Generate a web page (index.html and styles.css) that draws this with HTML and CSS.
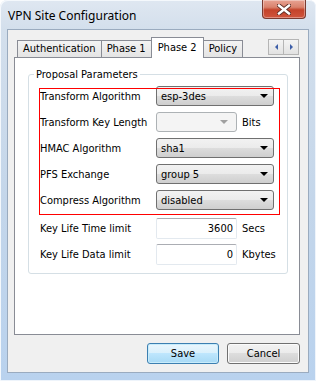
FILE: index.html
```html
<!DOCTYPE html>
<html lang="en">
<head>
  <meta charset="UTF-8">
  <meta name="viewport" content="width=device-width, initial-scale=1.0">
  <title>VPN Site Configuration</title>
  <link rel="stylesheet" href="styles.css">
</head>
<body>
  <div class="window">
    <!-- Title bar -->
    <div class="titlebar">
      <span class="title">VPN Site Configuration</span>
      <button class="close" type="button" aria-label="Close">
        <svg width="14" height="11" viewBox="0 0 14 11">
          <path d="M2 1.5 L12 9.5 M12 1.5 L2 9.5" stroke="#5a2a22" stroke-width="4.2" stroke-linecap="square"/>
          <path d="M2 1.5 L12 9.5 M12 1.5 L2 9.5" stroke="#ffffff" stroke-width="2.4" stroke-linecap="square"/>
        </svg>
      </button>
    </div>

    <div class="client">
      <div class="tabs">
        <div class="tab-strip">
          <span class="tab">Authentication</span>
          <span class="tab">Phase 1</span>
          <span class="tab active">Phase 2</span>
          <span class="tab">Policy</span>
          <span class="tab-scroll">
            <span class="scroll-btn"><span class="arrow left"></span></span>
            <span class="scroll-btn"><span class="arrow right"></span></span>
          </span>
        </div>

        <div class="tab-panel">
          <fieldset class="group">
            <legend>Proposal Parameters</legend>

            <div class="proposal">
              <div class="row">
                <label>Transform Algorithm</label>
                <div class="combo"><span>esp-3des</span><i class="caret"></i></div>
              </div>
              <div class="row">
                <label>Transform Key Length</label>
                <div class="combo short disabled"><span></span><i class="caret"></i></div>
                <span class="unit">Bits</span>
              </div>
              <div class="row">
                <label>HMAC Algorithm</label>
                <div class="combo"><span>sha1</span><i class="caret"></i></div>
              </div>
              <div class="row">
                <label>PFS Exchange</label>
                <div class="combo"><span>group 5</span><i class="caret"></i></div>
              </div>
              <div class="row">
                <label>Compress Algorithm</label>
                <div class="combo"><span>disabled</span><i class="caret"></i></div>
              </div>
              <!-- red annotation frame drawn over the rows -->
              <div class="highlight"></div>
            </div>

            <div class="lifetime">
              <div class="row">
                <label>Key Life Time limit</label>
                <div class="field">3600</div>
                <span class="unit">Secs</span>
              </div>
              <div class="row">
                <label>Key Life Data limit</label>
                <div class="field">0</div>
                <span class="unit">Kbytes</span>
              </div>
            </div>
          </fieldset>
        </div>
      </div>

      <div class="buttons">
        <button class="btn default" type="button">Save</button>
        <button class="btn" type="button">Cancel</button>
      </div>
    </div>
  </div>
</body>
</html>
```

FILE: styles.css
```css
/* Dialog window */
html, body {
  margin: 0;
  padding: 0;
  background: #ffffff;
}

.window {
  width: 316px;
  height: 381px;
  box-sizing: border-box;
  padding: 0 7px 8px 7px;
  border-radius: 7px 7px 0 0;
  background: linear-gradient(#dfe7f1 0px, #d3dfec 30px, #c4d6ea 200px, #b9d2ee 381px);
  box-shadow: inset 1px 1px 0 #f4f8fc, inset -1px -1px 0 #eef4fb;
  font-family: "DejaVu Sans Condensed", "Liberation Sans", sans-serif;
  font-size: 11px;
  color: #000;
}

.titlebar {
  height: 29px;
  display: flex;
  justify-content: space-between;
  align-items: flex-start;
}

.title {
  font-family: "Noto Sans", "Open Sans", sans-serif;
  font-size: 12px;
  margin: 7px 0 0 1px;
  color: #000;
}

.close {
  width: 44px;
  height: 19px;
  margin-right: 3px;
  padding: 0;
  border: 1px solid #7a3b31;
  border-top: none;
  border-radius: 0 0 4px 4px;
  background: linear-gradient(#e8a393 0%, #d9826d 40%, #c4432a 55%, #d0553d 100%);
  box-shadow: inset 0 0 0 1px rgba(255, 255, 255, 0.35);
  display: flex;
  align-items: center;
  justify-content: center;
}

/* Client area */
.client {
  height: 344px;
  box-sizing: border-box;
  border: 1px solid #9aabbf;
  background: #f0f0f0;
  padding: 7px 8px 0 6px;
  display: flex;
  flex-direction: column;
}

/* Tab control */
.tab-strip {
  height: 20px;
  display: flex;
  align-items: flex-end;
  padding-left: 3px;
  position: relative;
  z-index: 1;
}

.tab {
  height: 16px;
  line-height: 16px;
  padding: 0 5px;
  border: 1px solid #898c95;
  border-bottom: none;
  margin-left: -1px;
  background: linear-gradient(#f3f3f3, #e4e4e4);
  white-space: nowrap;
}

.tab:first-child {
  margin-left: 0;
}

.tab.active {
  height: 20px;
  line-height: 19px;
  margin-bottom: -1px;
  padding: 0 6px;
  background: #ffffff;
  position: relative;
}

.tab-scroll {
  margin-left: auto;
  margin-right: 1px;
  align-self: flex-start;
  margin-top: 2px;
  display: flex;
}

.scroll-btn {
  width: 14px;
  height: 14px;
  border: 1px solid #b5b5b5;
  background: linear-gradient(#f4f4f4, #e2e2e2);
  display: flex;
  align-items: center;
  justify-content: center;
}

.scroll-btn + .scroll-btn {
  margin-left: -1px;
}

.arrow {
  width: 0;
  height: 0;
  border-top: 3px solid transparent;
  border-bottom: 3px solid transparent;
}

.arrow.left {
  border-right: 3px solid #3d5ea8;
}

.arrow.right {
  border-left: 3px solid #3d5ea8;
}

.tab-panel {
  height: 278px;
  box-sizing: border-box;
  border: 1px solid #898c95;
  background: #ffffff;
  padding: 10px 13px 0 13px;
}

/* Group box */
.group {
  margin: 0;
  border: 1px solid #d5dfe5;
  border-radius: 3px;
  padding: 5px 11px 8px 11px;
}

.group legend {
  padding: 0 2px;
  margin-left: -6px;
}

.proposal {
  position: relative;
  display: flex;
  flex-direction: column;
  gap: 6px;
}

.row {
  display: flex;
  align-items: center;
}

.row label {
  width: 116px;
  flex: none;
}

.highlight {
  position: absolute;
  left: -1px;
  top: 2px;
  width: 241px;
  height: 127px;
  box-sizing: border-box;
  border: 1px solid #ff0000;
  pointer-events: none;
}

/* Combo boxes */
.combo {
  width: 118px;
  height: 20px;
  box-sizing: border-box;
  border: 1px solid #707070;
  border-radius: 3px;
  background: linear-gradient(#f2f2f2 0%, #ebebeb 50%, #dddddd 50%, #cfcfcf 100%);
  display: flex;
  align-items: center;
  justify-content: space-between;
  padding: 0 5px 0 4px;
}

.combo.short {
  width: 81px;
}

.combo.disabled {
  border-color: #adb2b5;
  background: #f4f4f4;
}

.caret {
  width: 0;
  height: 0;
  border-left: 4px solid transparent;
  border-right: 4px solid transparent;
  border-top: 4px solid #000;
}

.combo.disabled .caret {
  border-top-color: #a0a0a0;
  margin-right: 3px;
}

.unit {
  margin-left: 5px;
}

/* Text fields */
.lifetime {
  display: flex;
  flex-direction: column;
  gap: 5px;
  margin-top: 8px;
}

.field {
  width: 81px;
  height: 21px;
  box-sizing: border-box;
  border: 1px solid #e3e9ef;
  border-top-color: #abadb3;
  border-radius: 2px;
  background: #ffffff;
  text-align: right;
  line-height: 19px;
  padding-right: 3px;
}

/* Dialog buttons */
.buttons {
  display: flex;
  justify-content: flex-end;
  gap: 8px;
  margin-top: 8px;
}

.btn {
  width: 73px;
  height: 21px;
  padding: 0;
  border: 1px solid #707070;
  border-radius: 3px;
  background: linear-gradient(#f2f2f2 0%, #ebebeb 50%, #dddddd 50%, #cfcfcf 100%);
  box-shadow: inset 0 0 0 1px #fbfbfb;
  font-family: inherit;
  font-size: 11px;
  color: #000;
}

.btn.default {
  width: 72px;
  border-color: #3c7fb1;
  background: linear-gradient(#eaf6fd 0%, #d9f0fc 50%, #bee6fd 50%, #a7d9f5 100%);
  box-shadow: inset 0 0 0 1px #c8ecfb;
}
```
